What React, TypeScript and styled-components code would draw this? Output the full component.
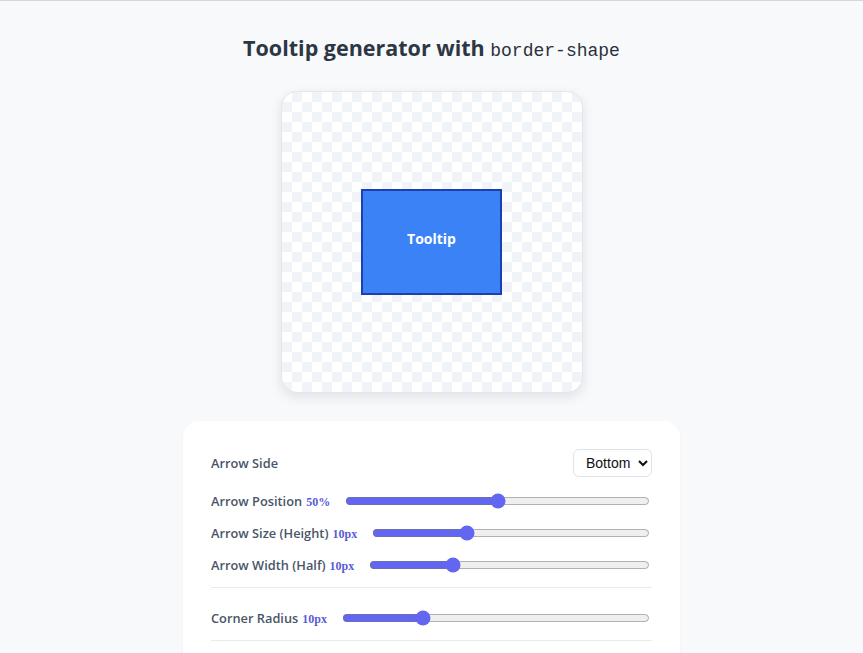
import React, { useState } from 'react'
import styled, { createGlobalStyle } from 'styled-components'

const GlobalStyle = createGlobalStyle`
  html, body {
    margin: 0;
    padding: 0;
    background: #f8f9fb;
  }
  body {
    font-family: "Open Sans", "Noto Sans", sans-serif;
    border-top: 1px solid #d4d7dc;
  }
`

const Page = styled.main`
  display: flex;
  flex-direction: column;
  align-items: center;
  padding: 31px 0 40px;
`

const Title = styled.h1`
  margin: 0 0 24px;
  font-size: 21.5px;
  line-height: 32px;
  font-weight: 700;
  color: #2d3643;
`

const Code = styled.code`
  font-family: "Liberation Mono", "DejaVu Sans Mono", monospace;
  font-weight: 400;
  font-size: 18px;
  color: #2a313b;
`

const Preview = styled.div`
  width: 300px;
  height: 300px;
  border: 1px solid #e3e7ec;
  border-radius: 16px;
  box-shadow: 0 4px 12px rgba(15, 23, 42, 0.1);
  background-color: #ffffff;
  background-image: conic-gradient(#f0f3f8 25%, transparent 0 50%, #f0f3f8 0 75%, transparent 0);
  background-size: 20px 20px;
  display: flex;
  align-items: center;
  justify-content: center;
  margin-bottom: 28px;
`

const Tooltip = styled.div`
  box-sizing: border-box;
  width: 141px;
  height: 106px;
  padding-bottom: 8px;
  background: #3b82f6;
  border: 2px solid #1e40af;
  display: flex;
  align-items: center;
  justify-content: center;
  color: #ffffff;
  font-weight: 700;
  font-size: 14px;
`

const Panel = styled.section`
  box-sizing: border-box;
  width: 497px;
  background: #ffffff;
  border-radius: 16px;
  padding: 28px 28px 40px;
  box-shadow: 0 1px 3px rgba(15, 23, 42, 0.04);
`

const Group = styled.div`
  display: flex;
  flex-direction: column;
  gap: 12px;
  padding-bottom: 12px;
  margin-bottom: 20px;
  border-bottom: 1px solid #e7eaee;
`

const Row = styled.div<{ $tall?: boolean }>`
  display: flex;
  align-items: center;
  justify-content: space-between;
  gap: 15px;
  min-height: ${(p) => (p.$tall ? '28px' : '20px')};
  margin-bottom: ${(p) => (p.$tall ? '2px' : '0')};
`

const Label = styled.label`
  font-size: 12.8px;
  font-weight: 600;
  color: #4a5568;
  white-space: nowrap;
`

const Value = styled.span`
  margin-left: 4px;
  font-family: "Liberation Serif", "DejaVu Serif", serif;
  font-weight: 700;
  font-size: 12px;
  color: #5b5bd6;
`

const Select = styled.select`
  height: 28px;
  padding: 0 4px 0 8px;
  font-family: "Liberation Sans", Arial, sans-serif;
  font-size: 14px;
  color: #111111;
  background: #ffffff;
  border: 1px solid #dfe3e8;
  border-radius: 6px;
`

const Range = styled.input`
  flex: 1;
  margin: 0 2px 0 0;
  accent-color: #6366f1;
  min-width: 0;
`

interface ISliderProps {
  label: string
  value: number
  unit: string
  min: number
  max: number
}

const Slider: React.FunctionComponent<ISliderProps> = (props) => {
  const [v, setV] = useState(props.value)
  return (
    <Row>
      <Label>
        {props.label}
        <Value>{v}{props.unit}</Value>
      </Label>
      <Range
        type="range"
        min={props.min}
        max={props.max}
        value={v}
        onChange={(e) => setV(Number(e.target.value))}
      />
    </Row>
  )
}

const App: React.FunctionComponent = () => (
  <>
    <GlobalStyle/>
    <Page>
      <Title>
        Tooltip generator with <Code>border-shape</Code>
      </Title>
      <Preview>
        <Tooltip>Tooltip</Tooltip>
      </Preview>
      <Panel>
        <Group>
          <Row $tall>
            <Label>Arrow Side</Label>
            <Select defaultValue="bottom">
              <option value="top">Top</option>
              <option value="right">Right</option>
              <option value="bottom">Bottom</option>
              <option value="left">Left</option>
            </Select>
          </Row>
          <Slider label="Arrow Position" value={50} unit="%" min={0} max={100}/>
          <Slider label="Arrow Size (Height)" value={10} unit="px" min={0} max={30}/>
          <Slider label="Arrow Width (Half)" value={10} unit="px" min={0} max={35}/>
        </Group>
        <Group>
          <Slider label="Corner Radius" value={10} unit="px" min={0} max={40}/>
        </Group>
      </Panel>
    </Page>
  </>
)

export default App
